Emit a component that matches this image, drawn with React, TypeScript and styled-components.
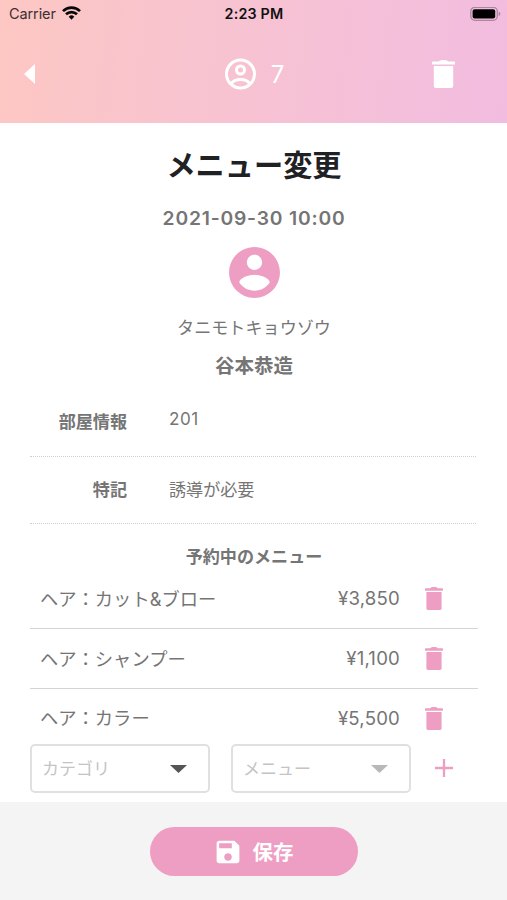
import React from "react";
import styled, { createGlobalStyle } from "styled-components";

const PINK = "#ee9ec2";

const GlobalStyle = createGlobalStyle`
  * { box-sizing: border-box; }
  body {
    margin: 0;
    background: #fff;
    color: #757575;
    font-family: Inter, "Noto Sans CJK JP", sans-serif;
  }
  button { font: inherit; border: 0; padding: 0; background: none; }
`;

const Screen = styled.div`
  width: 507px;
  height: 900px;
  display: flex;
  flex-direction: column;
  overflow: hidden;
`;

const Header = styled.header`
  height: 123px;
  flex: none;
  background: linear-gradient(97deg, #fdc7c3 0%, #f7c3d1 45%, #f2bce0 100%);
`;

const StatusBar = styled.div`
  height: 28px;
  display: grid;
  grid-template-columns: 1fr auto 1fr;
  align-items: center;
  padding: 0 6px 0 9px;
  color: #111;
  font-size: 14.5px;
  line-height: 28px;
`;

const Carrier = styled.span`
  display: flex;
  align-items: center;
  gap: 6px;
  color: #3b2f31;
  letter-spacing: -0.1px;
  svg { margin-bottom: 2px; }
`;

const Clock = styled.span`
  font-weight: 600;
  font-size: 14.3px;
  letter-spacing: 0.2px;
  margin-right: 2px;
`;

const Battery = styled.svg`
  justify-self: end;
`;

const NavBar = styled.nav`
  height: 92px;
  display: grid;
  grid-template-columns: 1fr auto 1fr;
  align-items: center;
  padding: 0 52px 0 24px;
  color: #fff;
`;

const IconButton = styled.button<{ $color?: string }>`
  display: flex;
  justify-content: center;
  align-items: center;
  color: ${(p) => p.$color ?? "#fff"};
`;

const NavStart = styled(IconButton)`
  justify-self: start;
`;

const NavEnd = styled(IconButton)`
  justify-self: end;
`;

const Count = styled.div`
  display: flex;
  align-items: center;
  gap: 15px;
  font-size: 24px;
  line-height: 32px;
  margin-left: 29px;
`;

const CountValue = styled.span`
  margin-top: 2px;
`;

const Content = styled.main`
  flex: 1;
  padding: 23px 29px 0 30px;
  display: flex;
  flex-direction: column;
`;

const Title = styled.h1`
  margin: 0;
  text-align: center;
  font-size: 29.2px;
  line-height: 40px;
  font-weight: 700;
  color: #202124;
`;

const DateTime = styled.div`
  margin-top: 18px;
  text-align: center;
  font-size: 19.3px;
  line-height: 28px;
  font-weight: 600;
  letter-spacing: 0.8px;
`;

const Avatar = styled.div`
  display: flex;
  justify-content: center;
  margin-top: 10px;
  height: 61px;
  color: ${PINK};
`;

const Kana = styled.div`
  margin-top: 12px;
  text-align: center;
  font-size: 17.1px;
  line-height: 26px;
`;

const Name = styled.div`
  margin-top: 11px;
  text-align: center;
  font-size: 19.5px;
  line-height: 28px;
  font-weight: 700;
`;

const Info = styled.dl`
  margin: 7px 2px 0 0;
`;

const InfoRow = styled.div<{ $height: number }>`
  height: ${(p) => p.$height}px;
  display: grid;
  grid-template-columns: 97px 1fr;
  column-gap: 42px;
  align-items: center;
  border-bottom: 1px dotted #cfcfcf;
  font-size: 17.1px;
  line-height: 26px;
`;

const InfoLabel = styled.dt`
  text-align: right;
  font-weight: 700;
`;

const InfoValue = styled.dd<{ $raise?: boolean }>`
  margin: 0 0 ${(p) => (p.$raise ? "6px" : "0")};
  letter-spacing: ${(p) => (p.$raise ? "0.5px" : "0")};
`;

const SectionTitle = styled.h2`
  margin: 20px 0 0;
  text-align: center;
  font-size: 17.1px;
  line-height: 26px;
  font-weight: 700;
`;

const MenuList = styled.ul`
  list-style: none;
  margin: -1px 0 0;
  padding: 0;
`;

const MenuRow = styled.li`
  height: 60px;
  display: grid;
  grid-template-columns: 1fr auto 88px;
  align-items: center;
  padding: 0 0 0 10px;
  border-bottom: 1px solid #d4d4d4;
  font-size: 18.3px;
  line-height: 28px;
  &:last-child {
    height: 55px;
    padding-top: 3px;
    border-bottom: 0;
  }
`;

const Price = styled.span`
  margin-right: -10px;
  padding-bottom: 1px;
  font-size: 18.6px;
  letter-spacing: 0.2px;
`;

const RowAction = styled(IconButton)`
  padding-right: 1px;
`;

const AddRow = styled.div`
  display: grid;
  grid-template-columns: 180px 180px 1fr;
  column-gap: 21px;
  align-items: center;
`;

const AddButton = styled(IconButton)`
  justify-self: start;
  margin: -1px 0 0 3px;
`;

const Select = styled.div<{ $arrow: string }>`
  height: 49px;
  display: flex;
  justify-content: space-between;
  align-items: center;
  padding: 0 21px 0 10px;
  border: 2px solid #e0e0e0;
  border-radius: 5px;
  color: #c4c4c4;
  font-size: 17px;
  line-height: 24px;
  svg { color: ${(p) => p.$arrow}; }
`;

const Footer = styled.footer`
  height: 98px;
  flex: none;
  display: flex;
  justify-content: center;
  padding: 25px 0 0 1px;
  background: #f4f4f4;
`;

const SaveButton = styled.button`
  && {
    width: 208px;
    height: 49px;
    display: flex;
    align-items: center;
    justify-content: center;
    gap: 13px;
    padding-left: 1px;
    border-radius: 25px;
    background: ${PINK};
    color: #fff;
    font-size: 20.5px;
    line-height: 26px;
    font-weight: 700;
  }
`;

const SaveLabel = styled.span`
  margin-top: 2px;
`;

type TrashProps = { width: number; height: number };

const Trash = ({ width, height }: TrashProps) => (
  <svg width={width} height={height} viewBox="0 0 23 28" preserveAspectRatio="none" fill="currentColor">
    <path d="M1 1.500H6.500Q8 0 10 0H13Q15 0 16.500 1.500H22Q23 1.500 23 2.500V4.500H0V2.500Q0 1.500 1 1.500z" />
    <path d="M1.800 6H21.200V26Q21.200 28 19.200 28H3.800Q1.800 28 1.800 26z" />
  </svg>
);

const Caret = () => (
  <svg width="17" height="8" viewBox="0 0 17 8" fill="currentColor">
    <path d="M0 0h17L8.500 8z" />
  </svg>
);

const items = [
  { name: "ヘア：カット&ブロー", price: "¥3,850" },
  { name: "ヘア：シャンプー", price: "¥1,100" },
  { name: "ヘア：カラー", price: "¥5,500" },
];

export default function App() {
  return (
    <Screen>
      <GlobalStyle />
      <Header>
        <StatusBar>
          <Carrier>
            Carrier
            <svg width="19" height="14" viewBox="0 0 19 14" fill="none" stroke="#080808" strokeWidth="2.700">
              <path d="M1 5.100a12.200 12.200 0 0 1 17 0" />
              <path d="M4 8.300a7.800 7.800 0 0 1 11 0" />
              <path d="M6.700 10.700a4 4 0 0 1 5.600 0L9.500 13.700z" fill="#080808" stroke="none" />
            </svg>
          </Carrier>
          <Clock>2:23 PM</Clock>
          <Battery width="31" height="15" viewBox="0 0 31 15">
            <rect x="0.800" y="0.300" width="26.500" height="13" rx="4" fill="none" stroke="#8d6f83" strokeOpacity="0.700" strokeWidth="1.300" />
            <rect x="2.600" y="2.200" width="22.600" height="9.200" rx="2" fill="#000" />
            <path d="M28.700 4.500v4.600q1.700-.7 1.700-2.300t-1.700-2.300z" fill="#8d6f83" fillOpacity="0.700" />
          </Battery>
        </StatusBar>
        <NavBar>
          <NavStart aria-label="戻る">
            <svg width="11" height="20" viewBox="0 0 11 20" fill="currentColor">
              <path d="M11 0v20L0 10z" />
            </svg>
          </NavStart>
          <Count>
            <svg width="32" height="32" viewBox="0 0 32 32" fill="none" stroke="currentColor" strokeWidth="3">
              <circle cx="16.500" cy="16" r="14" />
              <circle cx="16.500" cy="12" r="4" />
              <path d="M7 25.500c4.800-5.300 14.200-5.300 19 0" />
            </svg>
            <CountValue>7</CountValue>
          </Count>
          <NavEnd aria-label="削除">
            <Trash width={23} height={28} />
          </NavEnd>
        </NavBar>
      </Header>
      <Content>
        <Title>メニュー変更</Title>
        <DateTime>2021-09-30 10:00</DateTime>
        <Avatar>
          <svg width="61" height="61" viewBox="0 0 24 24" fill="currentColor">
            <path d="M12 2C6.480 2 2 6.480 2 12s4.480 10 10 10 10-4.480 10-10S17.520 2 12 2zm0 3c1.660 0 3 1.340 3 3s-1.340 3-3 3-3-1.340-3-3 1.340-3 3-3zm0 14.200c-2.500 0-4.710-1.280-6-3.220.03-1.990 4-3.080 6-3.080 1.990 0 5.970 1.090 6 3.080-1.290 1.940-3.500 3.220-6 3.220z" />
          </svg>
        </Avatar>
        <Kana>タニモトキョウゾウ</Kana>
        <Name>谷本恭造</Name>
        <Info>
          <InfoRow $height={70}>
            <InfoLabel>部屋情報</InfoLabel>
            <InfoValue $raise>201</InfoValue>
          </InfoRow>
          <InfoRow $height={67}>
            <InfoLabel>特記</InfoLabel>
            <InfoValue>誘導が必要</InfoValue>
          </InfoRow>
        </Info>
        <SectionTitle>予約中のメニュー</SectionTitle>
        <MenuList>
          {items.map((item) => (
            <MenuRow key={item.name}>
              <span>{item.name}</span>
              <Price>{item.price}</Price>
              <RowAction $color={PINK} aria-label="削除">
                <Trash width={18} height={23} />
              </RowAction>
            </MenuRow>
          ))}
        </MenuList>
        <AddRow>
          <Select $arrow="#555">
            <span>カテゴリ</span>
            <Caret />
          </Select>
          <Select $arrow="#b8b8b8">
            <span>メニュー</span>
            <Caret />
          </Select>
          <AddButton $color={PINK} aria-label="追加">
            <svg width="18" height="18" viewBox="0 0 18 18" stroke="currentColor" strokeWidth="2.300">
              <path d="M9 0v18M0 9h18" />
            </svg>
          </AddButton>
        </AddRow>
      </Content>
      <Footer>
        <SaveButton>
          <svg width="24" height="24" viewBox="2.500 2.500 19 19" fill="currentColor">
            <path d="M17 3H5c-1.110 0-2 .9-2 2v14c0 1.100.89 2 2 2h14c1.100 0 2-.9 2-2V7l-4-4zm-5 16c-1.660 0-3-1.340-3-3s1.340-3 3-3 3 1.340 3 3-1.340 3-3 3zm3-10H5V5h10v4z" />
          </svg>
          <SaveLabel>保存</SaveLabel>
        </SaveButton>
      </Footer>
    </Screen>
  );
}
